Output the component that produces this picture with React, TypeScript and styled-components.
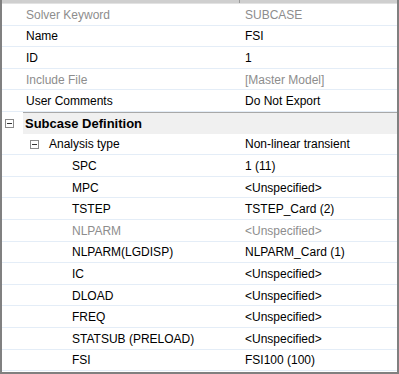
import styled, { createGlobalStyle } from "styled-components";

const GlobalStyle = createGlobalStyle`
  html, body {
    margin: 0;
    padding: 0;
    background: #ffffff;
  }
`

type Row = {
    label: string
    value: string
    level: number
    disabled?: boolean
    toggle?: boolean
}

const rows: Row[] = [
    {label: "Solver Keyword", value: "SUBCASE", level: 0, disabled: true},
    {label: "Name", value: "FSI", level: 0},
    {label: "ID", value: "1", level: 0},
    {label: "Include File", value: "[Master Model]", level: 0, disabled: true},
    {label: "User Comments", value: "Do Not Export", level: 0},
]

const subRows: Row[] = [
    {label: "Analysis type", value: "Non-linear transient", level: 1, toggle: true},
    {label: "SPC", value: "1 (11)", level: 2},
    {label: "MPC", value: "<Unspecified>", level: 2},
    {label: "TSTEP", value: "TSTEP_Card (2)", level: 2},
    {label: "NLPARM", value: "<Unspecified>", level: 2, disabled: true},
    {label: "NLPARM(LGDISP)", value: "NLPARM_Card (1)", level: 2},
    {label: "IC", value: "<Unspecified>", level: 2},
    {label: "DLOAD", value: "<Unspecified>", level: 2},
    {label: "FREQ", value: "<Unspecified>", level: 2},
    {label: "STATSUB (PRELOAD)", value: "<Unspecified>", level: 2},
    {label: "FSI", value: "FSI100 (100)", level: 2},
]

const Toggle = ({left}: { left: number }) => (
    <ToggleBox $left={left}>
        <svg width="9" height="9" viewBox="0 0 9 9">
            <rect x="0.5" y="0.5" width="8" height="8" fill="#fff" stroke="#8a8a8a"/>
            <line x1="2" y1="4.5" x2="7" y2="4.5" stroke="#333"/>
        </svg>
    </ToggleBox>
)

const PropRow = ({row}: { row: Row }) => (
    <StyledRow>
        <LabelCell $indent={24 + row.level * 23} $disabled={row.disabled}>
            {row.toggle ? <Toggle left={28}/> : null}
            {row.label}
        </LabelCell>
        <ValueCell $disabled={row.disabled}>{row.value}</ValueCell>
    </StyledRow>
)

export default function App() {
    return (
        <>
            <GlobalStyle/>
            <Frame>
                <TopStrip/>
                {rows.map(r => <PropRow key={r.label} row={r}/>)}
                <GroupRow>
                    <Toggle left={3}/>
                    <GroupTitle>Subcase Definition</GroupTitle>
                </GroupRow>
                {subRows.map(r => <PropRow key={r.label} row={r}/>)}
            </Frame>
        </>
    )
}

const Frame = styled.div`
  width: 399px;
  height: 374px;
  box-sizing: border-box;
  border-left: 2px solid #808080;
  border-right: 2px solid #808080;
  border-bottom: 2px solid #808080;
  background: #ffffff;
  display: flex;
  flex-direction: column;
  overflow: hidden;
  font-family: "Liberation Sans", Arial, sans-serif;
  font-size: 12px;
  color: #000;
`

const TopStrip = styled.div`
  height: 4px;
  flex: none;
  box-sizing: border-box;
  background: #cfcfcf;
  border-bottom: 1px solid #e2e2e2;
  position: relative;
  &::after {
    content: "";
    position: absolute;
    left: 237px;
    top: 0;
    width: 1px;
    height: 3px;
    background: #9a9a9a;
  }
`

const StyledRow = styled.div`
  height: 21.6px;
  flex: none;
  box-sizing: border-box;
  display: grid;
  grid-template-columns: 238px 1fr;
  align-items: center;
  border-bottom: 1px solid #e4edf7;
`

const LabelCell = styled.div<{ $indent: number; $disabled?: boolean }>`
  position: relative;
  padding-left: ${p => p.$indent}px;
  white-space: nowrap;
  overflow: hidden;
  color: ${p => p.$disabled ? "#8d8d8d" : "#000"};
  padding-top: 1px;
`

const ValueCell = styled.div<{ $disabled?: boolean }>`
  padding-left: 5px;
  white-space: nowrap;
  color: ${p => p.$disabled ? "#8d8d8d" : "#000"};
  padding-top: 1px;
`

const ToggleBox = styled.span<{ $left: number }>`
  position: absolute;
  left: ${p => p.$left}px;
  top: 50%;
  margin-top: -4px;
  width: 9px;
  height: 9px;
  display: block;
  svg {
    display: block;
  }
`

const GroupRow = styled.div`
  height: 21.6px;
  flex: none;
  box-sizing: border-box;
  position: relative;
  display: flex;
  align-items: center;
`

const GroupTitle = styled.div`
  margin-left: 21px;
  flex: 1;
  height: 100%;
  box-sizing: border-box;
  background: #f0f0f0;
  border-top: 1px solid #a8a8a8;
  display: flex;
  align-items: center;
  padding-left: 2px;
  font-weight: bold;
  font-size: 13px;
`
